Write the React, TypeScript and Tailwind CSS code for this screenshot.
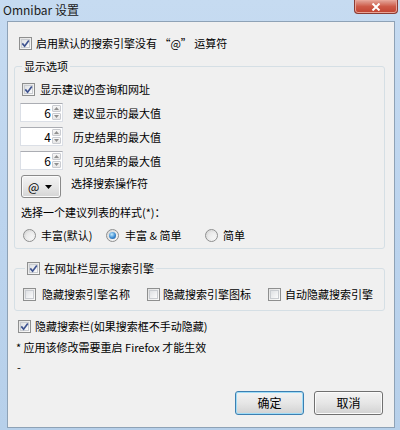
import React from 'react';

const font = { fontFamily: '"Noto Sans CJK SC", "Noto Sans", sans-serif' };

function CheckBox({ checked }: { checked?: boolean }) {
  return (
    <span className="relative flex h-[13px] w-[13px] shrink-0 items-center justify-center border border-[#8e8f8f] bg-linear-to-br from-[#e2e2e2] to-[#fbfbfb]">
      <span className="h-[9px] w-[9px] border border-[#c9ccd1] bg-linear-to-br from-[#dfe1e4] to-[#fbfbfc]" />
      {checked && (
        <svg className="absolute left-[1px] top-[1px]" width="9" height="9" viewBox="0 0 9 9">
          <path d="M1.3 4.4 L3.6 7.2 L7.8 1.4" fill="none" stroke="#3e5390" strokeWidth="1.7" />
        </svg>
      )}
    </span>
  );
}

function Radio({ checked }: { checked?: boolean }) {
  return (
    <span className="flex h-[13px] w-[13px] shrink-0 items-center justify-center rounded-full border border-[#8e8f8f] bg-linear-to-br from-[#d6d6d6] to-[#fbfbfb]">
      {checked ? (
        <span className="h-[7px] w-[7px] rounded-full bg-[radial-gradient(circle_at_40%_35%,#c4ecff,#3b8ad0_55%,#1d4e8f)]" />
      ) : (
        <span className="h-[7px] w-[7px] rounded-full bg-linear-to-br from-[#e4e4e4] to-[#f8f8f8]" />
      )}
    </span>
  );
}

function Spin({ value, label }: { value: string; label: string }) {
  return (
    <div className="flex items-center">
      <div className="ml-[5px] flex h-[19px] w-[43px] border border-[#dbdfe6] border-t-[#abadb3] bg-white">
        <span className="flex-1 pr-[1px] text-right text-[12px] leading-[17px]">{value}</span>
        <span className="flex w-[10px] flex-col gap-[1px] py-[1px] pr-[1px]">
          <span className="flex flex-1 items-center justify-center rounded-[1px] border border-[#c9cbd0] bg-linear-to-b from-[#f7f7f7] to-[#e6e6e6]">
            <svg width="5" height="3" viewBox="0 0 5 3"><path d="M0 3 L2.5 0 L5 3 Z" fill="#8f8f8f" /></svg>
          </span>
          <span className="flex flex-1 items-center justify-center rounded-[1px] border border-[#c9cbd0] bg-linear-to-b from-[#f7f7f7] to-[#e6e6e6]">
            <svg width="5" height="3" viewBox="0 0 5 3"><path d="M0 0 L5 0 L2.5 3 Z" fill="#8f8f8f" /></svg>
          </span>
        </span>
      </div>
      <span className="ml-[10px] leading-4">{label}</span>
    </div>
  );
}

function Button({ children, primary }: { children: React.ReactNode; primary?: boolean }) {
  return (
    <div
      className={
        'flex h-[24px] w-[69px] items-center justify-center rounded-[3px] border bg-linear-to-b from-[#f3f3f3] via-[#e6e6e6] to-[#d2d2d2] ' +
        (primary ? 'border-[#3c7fb1] shadow-[inset_0_0_0_1px_#9fdcf7]' : 'border-[#707070] shadow-[inset_0_0_0_1px_#fbfbfb]')
      }
    >
      <span className="text-[12px] leading-4">{children}</span>
    </div>
  );
}

export default function App() {
  return (
    <div
      style={font}
      className="flex h-[430px] w-[400px] flex-col overflow-hidden whitespace-nowrap bg-linear-to-b from-[#c6dbf1] via-[#bcd4ee] to-[#b7d0ea] pl-[7px] pr-[5px] pb-[2px] text-[11px] text-[#000]"
    >
      <div className="flex h-[21px] items-start justify-between">
        <span className="-ml-[4px] mt-[2px] text-[12px] leading-4 text-[#1b1b1b]">Omnibar 设置</span>
        <div className="-mr-[3px] flex h-[14px] w-[44px] items-center justify-center rounded-b-[4px] border border-t-0 border-[#8a3b33] bg-linear-to-b from-[#e3a79d] via-[#cd5a48] to-[#c0412f] shadow-[inset_0_0_0_1px_#e8a497]">
          <svg width="10" height="8" viewBox="0 0 10 8">
            <path d="M1.5 0.5 L8.5 7.5 M8.5 0.5 L1.5 7.5" stroke="#fff" strokeWidth="2" />
          </svg>
        </div>
      </div>

      <div className="flex h-[407px] flex-col border border-[#8ea2b6] bg-[#f0f0f0]">
        <div className="ml-[11px] mt-[13px] flex items-center gap-[4px]">
          <CheckBox checked />
          <span className="leading-4">启用默认的搜索引擎没有 “@” 运算符</span>
        </div>

        <fieldset className="ml-[6px] mr-[9px] mt-[7px] rounded-[3px] border border-[#d5dfe5] pb-[5px]">
          <legend className="ml-[7px] px-[2px] leading-4">显示选项</legend>
          <div className="ml-[7px] mt-[7px] flex items-center gap-[5px]">
            <CheckBox checked />
            <span className="leading-4">显示建议的查询和网址</span>
          </div>
          <div className="mt-[6px] flex flex-col gap-[5px]">
            <Spin value="6" label="建议显示的最大值" />
            <Spin value="4" label="历史结果的最大值" />
            <Spin value="6" label="可见结果的最大值" />
          </div>
          <div className="mt-[5px] flex items-start">
            <div className="ml-[6px] flex h-[23px] w-[40px] items-center gap-[6px] rounded-[3px] border border-[#8a8a8a] bg-linear-to-b from-[#f3f3f3] via-[#e7e7e7] to-[#d4d4d4] pl-[6px] shadow-[inset_0_0_0_1px_#fbfbfb]">
              <span className="text-[12px] leading-4">@</span>
              <svg width="7" height="4" viewBox="0 0 7 4"><path d="M0 0 L7 0 L3.5 4 Z" fill="#000" /></svg>
            </div>
            <span className="ml-[10px] leading-4">选择搜索操作符</span>
          </div>
          <div className="ml-[6px] mt-[6px] leading-4">选择一个建议列表的样式(*)：</div>
          <div className="mt-[7px] flex items-center">
            <span className="ml-[8px] flex w-[83px] items-center gap-[5px]">
              <Radio />
              <span className="leading-4">丰富(默认)</span>
            </span>
            <span className="flex w-[99px] items-center gap-[6px]">
              <Radio checked />
              <span className="leading-4">丰富 &amp; 简单</span>
            </span>
            <span className="flex items-center gap-[5px]">
              <Radio />
              <span className="leading-4">简单</span>
            </span>
          </div>
        </fieldset>

        <fieldset className="ml-[6px] mr-[9px] mt-[11px] rounded-[3px] border border-[#d5dfe5] pb-[8px]">
          <legend className="ml-[10px] flex items-center gap-[4px] px-[2px]">
            <CheckBox checked />
            <span className="leading-4">在网址栏显示搜索引擎</span>
          </legend>
          <div className="mt-[10px] flex items-center">
            <span className="ml-[8px] flex w-[124px] items-center gap-[6px]">
              <CheckBox />
              <span className="leading-4">隐藏搜索引擎名称</span>
            </span>
            <span className="flex w-[121px] items-center gap-[3px]">
              <CheckBox />
              <span className="leading-4">隐藏搜索引擎图标</span>
            </span>
            <span className="flex items-center gap-[4px]">
              <CheckBox />
              <span className="leading-4">自动隐藏搜索引擎</span>
            </span>
          </div>
        </fieldset>

        <div className="ml-[10px] mt-[7px] flex items-center gap-[4px]">
          <CheckBox checked />
          <span className="leading-4">隐藏搜索栏(如果搜索框不手动隐藏)</span>
        </div>
        <div className="ml-[8px] mt-[5px] leading-4">* 应用该修改需要重启 Firefox 才能生效</div>
        <div className="ml-[9px] mt-[4px] leading-4">-</div>

        <div className="mt-auto mb-[12px] mr-[11px] flex justify-end gap-[10px]">
          <Button primary>确定</Button>
          <Button>取消</Button>
        </div>
      </div>
    </div>
  );
}
